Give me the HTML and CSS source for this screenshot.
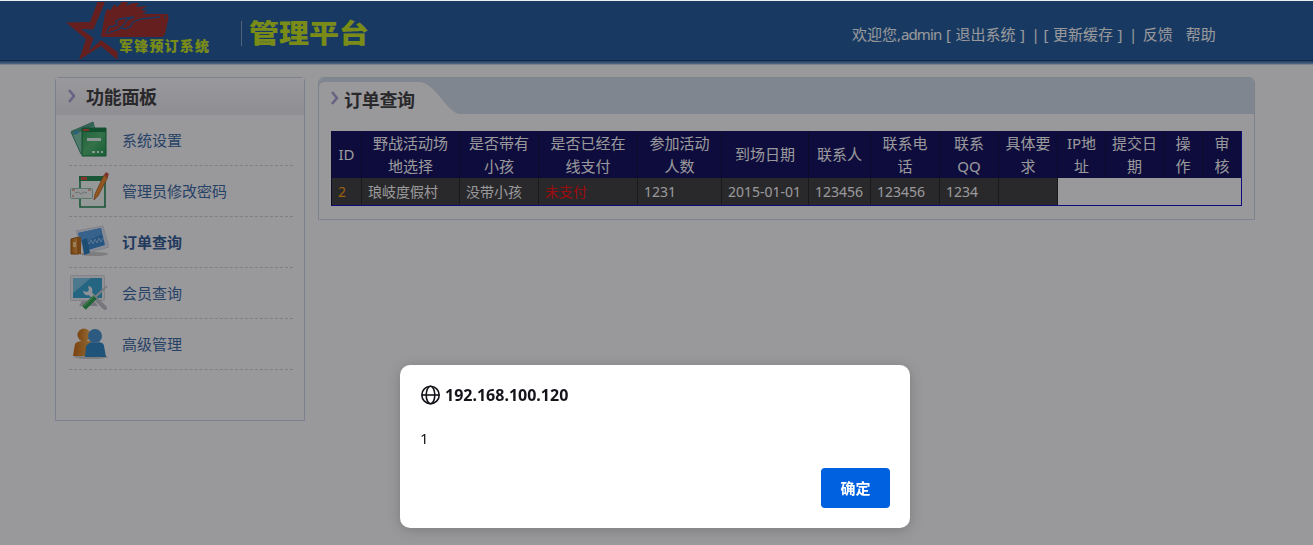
FILE: index.html
```html
<!DOCTYPE html>
<html lang="zh-CN">

<head>
    <meta charset="UTF-8">
    <title>管理平台</title>
    <link rel="stylesheet" href="styles.css">
</head>

<body>
    <div class="header">
        <div class="header-inner">
            <svg class="logo" width="340" height="58" viewBox="0 0 340 58">
                <path class="logo-red" d="M11 20.500L35 20L42.500 0H50L38.500 27.500L26 27L38.500 36L34 49L46 38L62.500 50V58L46 44L24 58L31 37Z"/>
                <path class="logo-red" d="M46 34L50 12L52 7L56 8L59 2L62 5L67 0H73L71 4L78 1L84 1L81 5L92 4L86 8L92 9L87 12H111Q114 12 113.500 16L110 32Q109 35 106 35H47Z"/>
                <path class="logo-cut" d="M51 32L54 25L62 23L61 19L65 17L79 15L72 18L68 24L65 26L71 27L76 24L78 20L86 17L105 15M53 31L65 27M109 15H111"/>
                <text class="logo-name" x="64" y="49" textLength="90">军锋预订系统</text>
                <path class="logo-line" d="M186.500 19V44"/>
                <text class="logo-title" x="194" y="41" textLength="120" lengthAdjust="spacingAndGlyphs">管理平台</text>
            </svg>
            <div class="top-links">
                <span>欢迎您,<span class="user">admin</span></span>
                <span>[</span><a>退出系统</a><span>]</span>
                <span class="bar">|</span>
                <span>[</span><a>更新缓存</a><span>]</span>
                <span class="bar">|</span>
                <a class="feedback">反馈</a><a class="help">帮助</a>
            </div>
        </div>
    </div>

    <div class="main">
        <div class="side">
            <h2 class="side-title">
                <svg class="arrow" width="10" height="16" viewBox="0 0 10 16"><path d="M2 2L7 8L2 14"/></svg>功能面板
            </h2>
            <ul class="menu">
                <li>
                    <svg width="40" height="40" viewBox="0 0 40 40">
                        <defs>
                            <linearGradient id="green" x1="0" y1="0" x2="1" y2="1"><stop offset="0" stop-color="#20994c"/><stop offset=".5" stop-color="#48b96a"/><stop offset="1" stop-color="#139646"/></linearGradient>
                            <linearGradient id="blue" x1="0" y1="0" x2="1" y2="1"><stop offset="0" stop-color="#68b5e0"/><stop offset="1" stop-color="#147fc5"/></linearGradient>
                            <linearGradient id="orange" x1="0" y1="0" x2="1" y2="0"><stop offset="0" stop-color="#c76400"/><stop offset="1" stop-color="#f5b04a"/></linearGradient>
                        </defs>
                        <path d="M2 12L24 2L29 22L12 34Z" fill="#79c6a5" stroke="#258c68"/>
                        <path d="M2 11L24 2L25 6L4 15Z" fill="#4a9f80"/>
                        <path d="M5 12L9 10L10 13L6 15Z" fill="#3a9fd0"/>
                        <path d="M13 8H37V36H13Z" fill="url(#green)" stroke="#087a3b"/>
                        <path d="M13 8H37V12H13Z" fill="#087a3b"/>
                        <path d="M14 9H20V11H14Z" fill="#d94731"/>
                        <path d="M18 18H32V21H18ZM23 31H26V33H23ZM28 31H30V33H28ZM32 31H34V33H32Z" fill="#e5faee"/>
                    </svg>
                    <a>系统设置</a>
                </li>
                <li>
                    <svg width="40" height="40" viewBox="0 0 40 40">
                        <path d="M11 6H36V36H11Z" fill="#f6fff8" stroke="#168549" stroke-width="1.600"/>
                        <path d="M10 5H37V10H10Z" fill="#168549"/>
                        <path d="M12 6H18V9H12Z" fill="#d94731"/>
                        <rect x="1.500" y="17.500" width="22" height="10" rx="1" fill="#f4f8f5" stroke="#8cc5a4"/>
                        <path d="M3 19H6M19 19H22M3 25H5" stroke="#d85b45"/>
                        <path d="M6 22L9 21L12 23L15 21L18 22" fill="none" stroke="#aebbb2"/>
                        <path d="M35 4L39 6L29 25L25 29L26 23Z" fill="#ef8b20" stroke="#a84a0b" stroke-width=".700"/>
                        <path d="M35 4L37 1L40 3L38 7Z" fill="#cf4938"/>
                    </svg>
                    <a>管理员修改密码</a>
                </li>
                <li class="on">
                    <svg width="40" height="40" viewBox="0 0 40 40">
                        <ellipse cx="25" cy="32" rx="14" ry="2" fill="#ccc"/>
                        <path d="M7 9L34 4L40 25L16 32Z" fill="#e2e9f2" stroke="#d2dae4"/>
                        <path d="M9 11L32 6L36 23L16 29Z" fill="#2e85cf"/>
                        <path d="M9 11L32 6L33 12L19 19L11 20Z" fill="#4d9de3"/>
                        <path d="M18 19L20 22L22 18L24 22L26 17L28 21L30 16L32 20L34 16" fill="none" stroke="#94c4ec"/>
                        <path d="M2 17L10 15V32H2Z" fill="url(#orange)" stroke="#9d5203"/>
                        <path d="M8 16L12 15V32H8Z" fill="#bf6810"/>
                        <path d="M13 18L18 16L21 31L15 33Z" fill="#1e77b7"/>
                        <path d="M4 20H7V25H4Z" fill="#ffd48b"/>
                    </svg>
                    <a>订单查询</a>
                </li>
                <li>
                    <svg width="40" height="40" viewBox="0 0 40 40">
                        <path d="M13 28H25L29 33H10Z" fill="#bbc0c4"/>
                        <rect x="1.500" y="2.500" width="34" height="25" rx="1" fill="#f0f1f2" stroke="#d6d9dc"/>
                        <path d="M4 5H33V25H4Z" fill="#2aa2d2"/>
                        <path d="M4 5H22L4 20Z" fill="#a5def1" opacity=".6"/>
                        <path d="M21 20L36 35" stroke="#bfc4c7" stroke-width="4" stroke-linecap="round"/>
                        <path d="M19 13Q25 14 23 20L27 25L24 27L20 22Q15 23 14 18L18 19L20 17Z" fill="#edf5f8"/>
                        <path d="M38 13L23 27" stroke="#c7cfd1" stroke-width="2"/>
                        <path d="M26 24L15 35" stroke="#23a345" stroke-width="5"/>
                        <path d="M25 23L15 33" stroke="#7dd37f"/>
                    </svg>
                    <a>会员查询</a>
                </li>
                <li>
                    <svg width="40" height="40" viewBox="0 0 40 40">
                        <ellipse cx="22" cy="33" rx="17" ry="2" fill="#ccc"/>
                        <circle cx="15" cy="11" r="6.500" fill="url(#orange)"/>
                        <path d="M4 32L6 20Q8 17 14 17H22L24 32Z" fill="url(#orange)"/>
                        <circle cx="26" cy="12" r="7" fill="#3a8fd0"/>
                        <path d="M16 33L17 22Q19 19 23 18Q26 20 30 18Q35 19 35 22L37 33Z" fill="#2381c2"/>
                    </svg>
                    <a>高级管理</a>
                </li>
            </ul>
        </div>

        <div class="content">
            <div class="content-head">
                <svg class="tab" width="145" height="32" viewBox="0 0 145 32"><path d="M1 32V6Q1 0 7 0H100C119 0 128 32 143 32Z"/></svg>
                <h2 class="content-title">
                    <svg class="arrow" width="10" height="16" viewBox="0 0 10 16"><path d="M2 1L7 7L2 13"/></svg>订单查询
                </h2>
            </div>
            <div class="content-body">
                <table class="orders">
                    <colgroup>
                        <col class="w30"><col class="w98"><col class="w79"><col class="w99"><col class="w84">
                        <col class="w87"><col class="w62"><col class="w69"><col class="w59"><col class="w59">
                        <col class="w48"><col class="w58"><col class="w39"><col class="w38">
                    </colgroup>
                    <tr>
                        <th>ID</th>
                        <th>野战活动场<br>地选择</th>
                        <th>是否带有<br>小孩</th>
                        <th>是否已经在<br>线支付</th>
                        <th>参加活动<br>人数</th>
                        <th>到场日期</th>
                        <th>联系人</th>
                        <th>联系电<br>话</th>
                        <th>联系<br>QQ</th>
                        <th>具体要<br>求</th>
                        <th>IP地<br>址</th>
                        <th>提交日<br>期</th>
                        <th>操<br>作</th>
                        <th>审<br>核</th>
                    </tr>
                    <tr>
                        <td class="num">2</td>
                        <td>琅岐度假村</td>
                        <td>没带小孩</td>
                        <td class="unpaid">未支付</td>
                        <td>1231</td>
                        <td>2015-01-01</td>
                        <td>123456</td>
                        <td>123456</td>
                        <td>1234</td>
                        <td></td>
                    </tr>
                </table>
            </div>
        </div>
    </div>

    <div class="mask"></div>

    <div class="dialog">
        <div class="dialog-title">
            <svg width="20" height="20" viewBox="0 0 20 20">
                <circle cx="10.500" cy="10" r="8.700"/><ellipse cx="10.500" cy="10" rx="4.300" ry="8.700"/><path d="M1.800 10H19.200"/>
            </svg>
            <span>192.168.100.120</span>
        </div>
        <p class="dialog-text">1</p>
        <button class="dialog-ok">确定</button>
    </div>
</body>

</html>
```

FILE: styles.css
```css
* {
    box-sizing: border-box;
}

body {
    margin: 0;
    height: 545px;
    overflow: hidden;
    background: #fff;
    font-family: "Noto Sans", "Noto Sans CJK SC", sans-serif;
    font-size: 15px;
    color: #333;
}

h2, ul, p {
    margin: 0;
    padding: 0;
}

/* 顶部 */
.header {
    height: 65px;
    padding-top: 2px;
    background: linear-gradient(#155598 0, #155598 60px, #0a2e62 60px, #0a2e62 61px, #2c65a8 61px, #5586bd 63px, #8eacc9 64px, #fff 65px);
}

.header-inner {
    width: 1200px;
    margin: 0 auto 0 55px;
    display: flex;
    justify-content: space-between;
}

.logo-red {
    fill: #a0241d;
}

.logo-cut {
    fill: none;
    stroke: #155598;
    stroke-width: 1.3;
}

.logo-name,
.logo-title {
    fill: #c6ea10;
    font-family: "Noto Sans CJK SC", sans-serif;
    font-weight: 900;
}

.logo-name {
    font-size: 14px;
}

.logo-title {
    font-size: 26px;
}

.logo-line {
    stroke: #7e9fc1;
}

.top-links {
    display: flex;
    width: 403px;
    height: 64px;
    line-height: 64px;
    color: #fff;
    white-space: nowrap;
}

.user {
    letter-spacing: -.9px;
}

.top-links > span,
.top-links > a {
    margin-right: 4.6px;
}

.top-links .bar {
    margin: 0 3.5px 0 2px;
}

.top-links .feedback {
    margin-left: 2px;
    margin-right: 13px;
}

.top-links .help {
    margin-right: 0;
}

/* 主体 */
.main {
    display: flex;
    align-items: flex-start;
    gap: 13px;
    width: 1200px;
    margin: 12px 0 0 55px;
}

.side {
    width: 250px;
    height: 344px;
    border: 1px solid #c8d6e8;
    border-radius: 4px 4px 0 0;
}

.side-title,
.content-title {
    display: flex;
    align-items: center;
    gap: 9px;
    padding-bottom: 2px;
    font-size: 18px;
    letter-spacing: -.3px;
}

.side-title {
    height: 37px;
    padding-left: 11px;
    background: linear-gradient(#fff, #ededf0);
}

.arrow path {
    fill: none;
    stroke: #a49bd2;
    stroke-width: 2.5;
}

.menu {
    list-style: none;
    padding: 0 11px 0 13px;
}

.menu li {
    display: flex;
    align-items: center;
    gap: 13px;
    height: 51px;
    border-bottom: 1px dashed #d0d0d0;
}

.menu a {
    padding-bottom: 2px;
    color: #2f64a0;
}

.menu .on a {
    color: #255590;
    font-weight: bold;
}

.content {
    width: 937px;
    height: 143px;
    border: 1px solid #d0dee8;
    border-color: #cddaec;
    border-radius: 6px 6px 0 0;
    overflow: hidden;
}

.content-head {
    display: grid;
    height: 36px;
    padding-top: 4px;
    background: #d0deec;
}

.content-head > * {
    grid-area: 1 / 1;
}

.tab {
    fill: #fff;
    margin-left: -1px;
}

.content-title {
    height: 36px;
    padding-left: 11px;
    gap: 4px;
}

.content-body {
    padding: 17px 12px;
}

.orders {
    table-layout: fixed;
    width: 911px;
    border-collapse: separate;
    border-spacing: 0;
    border: 1px solid #0000c0;
    border-left-color: #00002e;
    border-top: 0;
    line-height: 23px;
}

.orders th {
    height: 47px;
    padding: 0;
    background: #000052;
    border-right: 1px solid #00002e;
    font-weight: normal;
    color: #fff;
}

.orders th:last-child {
    border-right: 0;
}

.orders td {
    height: 27px;
    padding: 0 0 0 6px;
    background: #333;
    border-right: 1px solid #181818;
    font-size: 14px;
    color: #fff;
    white-space: nowrap;
}

.orders .num {
    color: #f90;
}

.orders .unpaid {
    color: #f00;
}

.w30 { width: 30px; }
.w98 { width: 98px; }
.w79 { width: 79px; }
.w99 { width: 99px; }
.w84 { width: 84px; }
.w87 { width: 87px; }
.w62 { width: 62px; }
.w69 { width: 69px; }
.w59 { width: 59px; }
.w48 { width: 48px; }
.w58 { width: 58px; }
.w39 { width: 39px; }
.w38 { width: 38px; }

/* 遮罩和弹窗 */
.mask {
    position: fixed;
    inset: 0;
    background: rgba(28, 27, 34, .45);
    border-top: 1px solid #e9eff2;
}

.dialog {
    position: fixed;
    left: 400px;
    top: 365px;
    width: 510px;
    height: 163px;
    padding: 20px;
    display: flex;
    flex-direction: column;
    border-radius: 10px;
    background: #fff;
    color: #15141a;
    box-shadow: 0 2px 14px rgba(0, 0, 0, .2);
}

.dialog-title {
    display: flex;
    align-items: center;
    gap: 5px;
    height: 20px;
    font-size: 16px;
    font-weight: bold;
}

.dialog-title svg {
    fill: none;
    stroke: #15141a;
    stroke-width: 1.6;
}

.dialog-text {
    margin-top: 22px;
    line-height: 22px;
}

.dialog-ok {
    align-self: flex-end;
    width: 69px;
    height: 40px;
    margin-top: auto;
    padding-bottom: 3px;
    border: 0;
    border-radius: 4px;
    background: #0061e0;
    color: #fff;
    font: bold 15px "Noto Sans CJK SC", sans-serif;
}
```
